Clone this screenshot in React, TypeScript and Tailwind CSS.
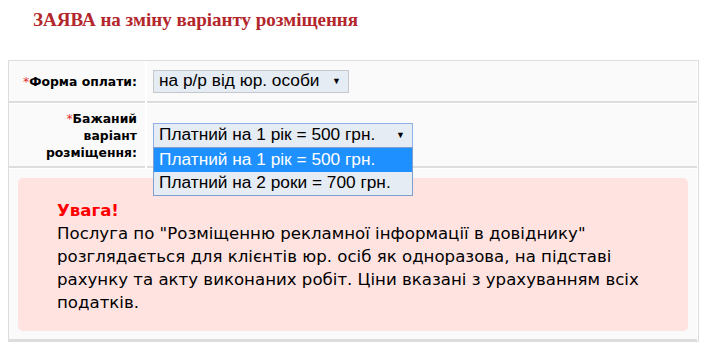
import { type FC } from "react";

const Arrow: FC = () => (
  <span className="ml-auto pl-2 text-[9px] leading-none text-black">▼</span>
);

const Label: FC<{ children: React.ReactNode }> = ({ children }) => (
  <div className="flex items-center justify-end bg-[#fafafa] border-b-2 border-[#dddddd] pl-2 pr-[8px] text-right text-[12.4px] font-bold leading-[17px] text-black [font-family:'DejaVu_Sans',Verdana,sans-serif]">
    <div>
      <span className="font-normal text-[#e03030]">*</span>
      {children}
    </div>
  </div>
);

export default function App() {
  return (
    <div className="min-h-screen bg-white [font-family:'Liberation_Sans',Arial,sans-serif]">
      <div className="h-[60px] pl-[33px] pt-[9px]">
        <h1 className="text-[19px] font-bold leading-[22px] text-[#b3262b] [font-family:'Liberation_Serif','Times_New_Roman',serif]">
          ЗАЯВА на зміну варіанту розміщення
        </h1>
      </div>

      <div className="ml-[8px] w-[691px] border border-[#dddddd] bg-white">
        <div className="grid grid-cols-[136px_1fr] gap-x-[2px] gap-y-[1px] pr-[1px]">
          <Label>Форма оплати:</Label>
          <div className="flex h-[42px] items-center bg-[#fafafa] border-b-2 border-[#dddddd] pl-[6px]">
            <div className="flex h-[23px] w-[196px] items-center border border-[#c4c8cc] bg-[#e6ecf4] pl-[5px] pr-[7px] text-[17.3px] text-black">
              на р/р від юр. особи
              <Arrow />
            </div>
          </div>

          <Label>
            Бажаний
            <br />
            варіант
            <br />
            розміщення:
          </Label>
          <div className="flex h-[64px] items-center bg-[#fafafa] border-b-2 border-[#dddddd] pl-[6px]">
            <div className="relative">
              <div className="flex h-[25px] w-[260px] items-center border border-[#8fb0e6] bg-[#e6ecf4] pl-[5px] pr-[7px] text-[17.3px] text-black">
                Платний на 1 рік = 500 грн.
                <Arrow />
              </div>
              <div className="absolute left-0 top-[24px] z-10 w-[260px] border border-[#7f9fcf] bg-[#e6ecf4] text-[17.3px]">
                <div className="flex h-[24px] items-center bg-[#1e90ff] pl-[5px] text-white">
                  Платний на 1 рік = 500 грн.
                </div>
                <div className="flex h-[23px] items-center pl-[5px] text-black">
                  Платний на 2 роки = 700 грн.
                </div>
              </div>
            </div>
          </div>

          <div className="col-span-2 bg-[#fafafa] border-b-2 border-[#dddddd] px-[9px] pb-[8px] pt-[9px]">
            <div className="rounded-[5px] bg-[#ffe3e1] pb-[17px] pl-[39px] pr-[30px] pt-[21px] text-[16.6px] leading-[23px] text-black [font-family:'DejaVu_Sans',Tahoma,sans-serif]">
              <div className="font-bold text-[#ff0000]">Увага!</div>
              <div>
                Послуга по "Розміщенню рекламної інформації в довіднику" розглядається для клієнтів юр. осіб як одноразова, на підставі рахунку та акту виконаних робіт. Ціни вказані з урахуванням всіх податків.
              </div>
            </div>
          </div>
        </div>
      </div>
    </div>
  );
}
